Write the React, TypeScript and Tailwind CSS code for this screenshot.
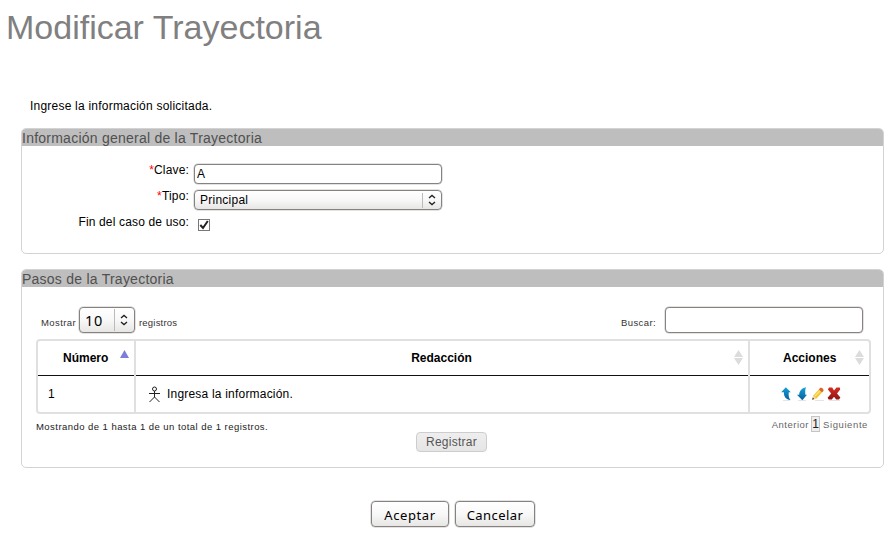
import type { ReactNode } from "react";

const control =
  "rounded-[4px] border border-[#858280] shadow-[0_0_0_0.5px_#c9c7c5]";
const raised = "bg-linear-to-b from-white via-[#f8f8f8] to-[#e7e6e5]";

function Stepper() {
  return (
    <svg width="8" height="12" viewBox="0 0 8 12" fill="none" stroke="#222" strokeWidth="1.3">
      <path d="M1 4 4 1.4 7 4M1 8 4 10.6 7 8" />
    </svg>
  );
}

function Panel({ title, className, children }: { title: string; className: string; children: ReactNode }) {
  return (
    <section className={`ml-[21px] w-[863px] rounded-[5px] border border-[#d3d3d3] overflow-hidden ${className}`}>
      <h2 className="h-[17px] bg-[#bebebe] text-[14px] leading-[19px] text-[#505050] tracking-[0.24px] whitespace-nowrap">
        {title}
      </h2>
      {children}
    </section>
  );
}

function Field({ label, required, children }: { label: string; required?: boolean; children: ReactNode }) {
  return (
    <div className="flex h-[26px] items-start">
      <div className="w-[167px] pt-[1px] text-right text-[12px] leading-[14px] tracking-[0.16px]">
        {required && <span className="text-[#f00]">*</span>}
        {label}
      </div>
      {children}
    </div>
  );
}

function SortBoth() {
  return (
    <svg width="9" height="15" viewBox="0 0 9 15" className="mb-[1px]" fill="#dcdcdc">
      <path d="M4.5 0 9 7H0ZM0 8H9L4.5 15Z" />
    </svg>
  );
}

function Actor() {
  return (
    <svg width="13" height="17" viewBox="0 0 13 17" fill="none" stroke="#222" strokeWidth="1">
      <circle cx="6.5" cy="3" r="2" />
      <path d="M6.5 5V11M1 7.5H12M6.5 11 1.5 16M6.5 11 11.5 16" />
    </svg>
  );
}

function Actions() {
  return (
    <div className="flex items-center pl-[30px]">
      <svg width="64" height="16" viewBox="0 0 64 16">
        <defs>
          <linearGradient id="blue" x1="0" y1="0" x2="0" y2="1">
            <stop offset="0" stopColor="#16a0d8" />
            <stop offset="1" stopColor="#075f9e" />
          </linearGradient>
          <linearGradient id="red" x1="0" y1="0" x2="0" y2="1">
            <stop offset="0" stopColor="#d82b20" />
            <stop offset="1" stopColor="#8d1515" />
          </linearGradient>
        </defs>
        <path d="M3 14.5H10M18 14.5H26M35 14.5H44M49 14.5H60" stroke="#e4e4e4" />
        <path d="M5.8 1.3 10.8 6.2H8.8C8.4 9.5 8.8 12 10.5 14C6 13.2 3.8 11 3.9 6.2H1.2Z" fill="url(#blue)" />
        <path d="M26 1.3C25 3.5 25.2 6 25.3 8.8H27L22.3 14.2 17 8.8H19.2C19.4 5 21.5 2.2 26 1.3Z" fill="url(#blue)" />
        <path d="M32.2 13.7 33.3 9.6 38.8 3.5 42 6.5 36.5 12.5Z" fill="#f5c632" />
        <path d="M34.8 10.2 40.2 4.6" stroke="#ffec83" strokeWidth="1.2" />
        <path d="M32.2 13.7 33.3 9.6 36.5 12.5Z" fill="#f2d6a6" />
        <path d="M32.2 13.7 32.8 11.6 34.2 13Z" fill="#333" />
        <path d="M38.8 3.5 40.2 1.8Q41.8 1.2 43 2.8T43.2 5.2L42 6.5Z" fill="#dc6928" />
        <path d="M49 1.6H52.2L54 4.6 56.5 1.6H59.8L60.2 3.6 57 7.4 60.4 11.5 59 13.6H56.2L54 10.8 51.8 13.6H48.7L47.6 11.8 51.2 7.6 47.9 3.6Z" fill="url(#red)" />
      </svg>
    </div>
  );
}

export default function App() {
  return (
    <main className="h-[554px] w-[890px] overflow-hidden bg-white font-['Liberation_Sans',Arial,sans-serif] text-black">
      <h1 className="h-[98px] pt-[7px] pl-[6px] text-[34px] leading-[40px] text-[#808080] whitespace-nowrap">
        Modificar Trayectoria
      </h1>
      <p className="h-[30px] pl-[30px] text-[12px] leading-[16px] tracking-[0.22px]">
        Ingrese la información solicitada.
      </p>

      <Panel title="Información general de la Trayectoria" className="h-[126px]">
        <div className="pt-[16px]">
          <Field label="Clave:" required>
            <input
              defaultValue="A"
              className={`mt-[2px] ml-[5px] h-[20px] w-[248px] bg-white px-[2px] text-[12px] outline-none ${control}`}
            />
          </Field>
          <Field label="Tipo:" required>
            <div className={`mt-[2px] ml-[5px] flex h-[20px] w-[248px] items-center pl-[5px] text-[12px] tracking-[0.25px] ${control} ${raised}`}>
              <span className="flex-1">Principal</span>
              <span className="flex h-[15px] w-[19px] items-center justify-center border-l border-[#bbb]">
                <Stepper />
              </span>
            </div>
          </Field>
          <Field label="Fin del caso de uso:">
            <span className="mt-[5px] ml-[9px] flex size-[12px] items-center justify-center border border-[#777]">
              <svg width="10" height="10" viewBox="0 0 10 10" fill="none" stroke="#222" strokeWidth="2">
                <path d="M1.3 5 4 8 8.8 1" />
              </svg>
            </span>
          </Field>
        </div>
      </Panel>

      <Panel title="Pasos de la Trayectoria" className="mt-[15px] h-[199px]">
        <div className="flex h-[52px] items-start pt-[20px] pl-[19px] text-[9.5px] text-[#333]">
          <span className="w-[38px] pt-[10px] leading-[12px] tracking-[0.4px]">Mostrar</span>
          <div className={`flex h-[26px] w-[56px] items-center pl-[5px] font-['Noto_Sans',sans-serif] text-[14.5px] tracking-[0.6px] text-black ${control} ${raised}`}>
            <span className="flex-1 pt-[2px]">10</span>
            <span className="flex h-[22px] w-[20px] items-center justify-center border-l border-[#bbb] pr-[2px]">
              <Stepper />
            </span>
          </div>
          <span className="w-[486px] pt-[10px] pl-[4px] leading-[12px] tracking-[0.2px]">registros</span>
          <span className="w-[44px] pt-[10px] leading-[12px] tracking-[0.4px]">Buscar:</span>
          <input className={`h-[26px] w-[198px] bg-white outline-none ${control}`} />
        </div>

        <div className="ml-[14px] grid h-[75px] w-[835px] grid-cols-[98px_614px_119px] grid-rows-[35px_36px] overflow-hidden rounded-[4px] border-2 border-[#e0e0e0] text-[12px]">
          <div className="flex items-center border-r-2 border-[#e0e0e0] pb-[2px] shadow-[inset_0_-1px_0_#111] font-bold">
            <span className="w-[82px] pl-[25px]">Número</span>
            <svg width="9" height="8" viewBox="0 0 9 8" className="mb-[7px]" fill="#7d7ddc">
              <path d="M4.5 0 9 8H0Z" />
            </svg>
          </div>
          <div className="flex items-center border-r-2 border-[#e0e0e0] pb-[2px] shadow-[inset_0_-1px_0_#111] font-bold">
            <span className="w-[598px] pl-[13px] text-center">Redacción</span>
            <SortBoth />
          </div>
          <div className="flex items-center pb-[2px] shadow-[inset_0_-1px_0_#111] font-bold">
            <span className="w-[105px] pl-[33px]">Acciones</span>
            <SortBoth />
          </div>
          <div className="flex items-center border-r-2 border-[#e0e0e0] pl-[10px]">1</div>
          <div className="flex items-center gap-[6px] border-r-2 border-[#e0e0e0] pl-[12px]">
            <Actor />
            <span className="tracking-[0.2px]">Ingresa la información.</span>
          </div>
          <Actions />
        </div>

        <div className="flex h-[18px] justify-between pt-[2px] pr-[15px] pl-[14px] text-[9.5px] leading-[12px] whitespace-nowrap">
          <span className="pt-[5px] tracking-[0.45px] text-[#222]">
            Mostrando de 1 hasta 1 de un total de 1 registros.
          </span>
          <div className="flex items-start text-[#666]">
            <span className="pt-[3px] tracking-[0.5px]">Anterior</span>
            <span className="mr-[3px] ml-[2px] h-[16px] w-[9px] border border-[#c5c5c5] bg-[#eee] text-center text-[12px] leading-[14px] text-[#222]">
              1
            </span>
            <span className="pt-[3px] tracking-[0.6px]">Siguiente</span>
          </div>
        </div>
        <button className="ml-[394px] block h-[20px] w-[71px] rounded-[4px] border border-[#cdcdcd] bg-linear-to-b from-[#eee] to-[#e5e5e5] text-[12px] leading-[18px] tracking-[0.25px] text-[#555]">
          Registrar
        </button>
      </Panel>

      <div className="flex gap-[6px] pt-[33px] pl-[371px] font-['Noto_Sans',sans-serif] text-[13px]">
        <button className={`h-[26px] w-[78px] pt-[3px] tracking-[0.6px] ${control} ${raised}`}>Aceptar</button>
        <button className={`h-[26px] w-[80px] pt-[3px] tracking-[0.45px] ${control} ${raised}`}>Cancelar</button>
      </div>
    </main>
  );
}
